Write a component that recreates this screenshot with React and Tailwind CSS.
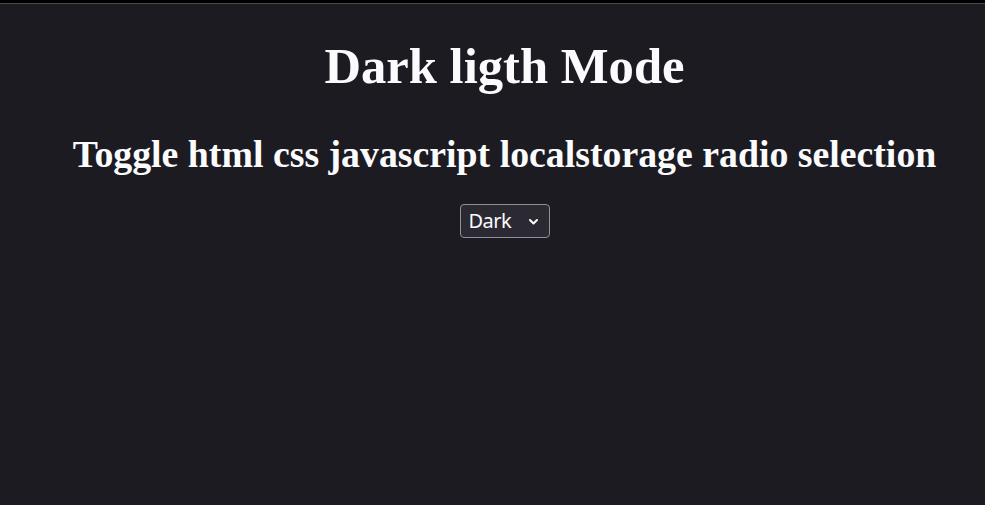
import React, { useState } from "react";

const App = () => {
  const [mode, setMode] = useState("dark");

  return (
    <div className="w-screen h-screen overflow-hidden bg-[#1c1b22] text-[#fbfbfe] flex flex-col">
      <div className="h-[3px] bg-black" />
      <div className="h-px bg-[#4a4a50]" />
      <div className="flex flex-col items-center pl-6" style={{ fontFamily: '"Liberation Serif", "Times New Roman", serif' }}>
        <h1 className="mt-[37px] text-[50.67px] font-bold leading-[50.67px]">Dark ligth Mode</h1>
        <h2 className="mt-[43px] text-[37.8px] font-bold leading-[38px]">
          Toggle html css javascript localstorage radio selection
        </h2>
        <div className="relative mt-[31px]">
          <select
            value={mode}
            onChange={(e) => setMode(e.target.value)}
            className="appearance-none h-[34px] w-[90px] pl-[8px] pr-6 rounded-[4px] border border-[#8f8f9d] bg-[#2b2a33] text-[#fbfbfe] text-[20px] tracking-[-0.5px] focus:outline-none"
            style={{ fontFamily: '"Noto Sans", "Open Sans", sans-serif' }}
          >
            <option value="dark">Dark</option>
            <option value="light">Light</option>
          </select>
          <svg
            className="pointer-events-none absolute right-[11px] top-[14px]"
            width="11"
            height="8"
            viewBox="0 0 11 8"
            fill="none"
            stroke="#fbfbfe"
            strokeWidth="2"
            strokeLinecap="round"
            strokeLinejoin="round"
          >
            <path d="M2 2l3.5 3.5L9 2" />
          </svg>
        </div>
      </div>
    </div>
  );
};

export default App;
